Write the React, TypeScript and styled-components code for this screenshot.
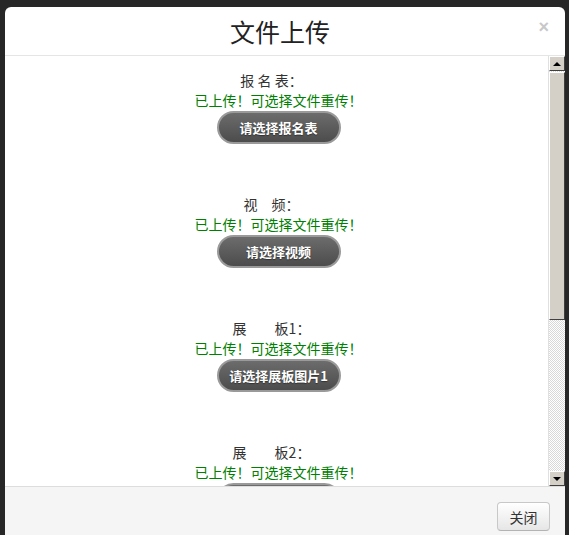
import React from "react";
import styled, { createGlobalStyle } from "styled-components";

const Global = createGlobalStyle`
  html, body { margin: 0; padding: 0; background: #272727; }
  body { font-family: "Liberation Sans", "Noto Sans CJK SC", sans-serif; }
`;

const Page = styled.div`
  width: 569px;
  height: 535px;
  overflow: hidden;
  background: #272727;
  padding: 7px 4px 0 5px;
  box-sizing: border-box;
`;

const Modal = styled.div`
  width: 560px;
  height: 540px;
  background: #fff;
  border-radius: 6px 6px 0 0;
  display: flex;
  flex-direction: column;
  overflow: hidden;
`;

const Header = styled.div`
  height: 48px;
  border-bottom: 1px solid #e5e5e5;
  position: relative;
  display: flex;
  align-items: center;
  justify-content: center;
`;

const Title = styled.h3`
  margin: 0;
  font-family: "Noto Sans CJK SC", sans-serif;
  font-weight: 400;
  font-size: 25px;
  color: #222;
  margin-left: -10px;
`;

const Close = styled.span`
  position: absolute;
  right: 16px;
  top: 10px;
  font-family: "Liberation Sans", sans-serif;
  font-weight: bold;
  font-size: 18px;
  color: #c8c8c8;
`;

const Body = styled.div`
  height: 430px;
  display: flex;
`;

const Content = styled.div`
  flex: 1;
  overflow: hidden;
  padding-top: 14px;
  display: flex;
  flex-direction: column;
  align-items: center;
`;

const Section = styled.div`
  height: 124px;
  display: flex;
  flex-direction: column;
  align-items: center;
  flex-shrink: 0;
`;

const Label = styled.div`
  font-family: "Noto Sans CJK SC", sans-serif;
  font-size: 14px;
  line-height: 20px;
  color: #333;
  white-space: pre;
  padding-right: 10px;
`;

const Status = styled.div`
  font-family: "Noto Sans CJK SC", sans-serif;
  font-size: 14px;
  line-height: 21px;
  color: #008000;
  margin-left: 4px;
`;

const PickButton = styled.button`
  width: 124px;
  height: 33px;
  border-radius: 17px;
  border: 2px solid #9a9a9a;
  background: linear-gradient(#6c6c6c, #4c4c4c);
  color: #fff;
  font-family: "Noto Sans CJK SC", sans-serif;
  font-weight: bold;
  font-size: 13px;
  padding: 0;
  box-sizing: border-box;
  margin-left: 4px;
  text-shadow: 0 1px 1px rgba(0,0,0,0.4);
`;

const Scrollbar = styled.div`
  width: 16px;
  display: flex;
  flex-direction: column;
  border-left: 1px solid #e0e0e0;
  background-color: #f0f0f0;
  background-image: repeating-conic-gradient(#d8d8d8 0 25%, #fff 0 50%);
  background-size: 2px 2px;
`;

const Arrow = styled.div`
  height: 15px;
  background: #d4d0c8;
  border: 1px solid;
  border-color: #fff #404040 #404040 #fff;
  box-sizing: border-box;
  display: flex;
  align-items: center;
  justify-content: center;
  flex-shrink: 0;
`;

const Tri = styled.div<{ $down?: boolean }>`
  width: 0;
  height: 0;
  border-left: 4px solid transparent;
  border-right: 4px solid transparent;
  ${(p) => (p.$down ? "border-top: 4px solid #000;" : "border-bottom: 4px solid #000;")}
`;

const Thumb = styled.div`
  height: 248px;
  margin-top: 1px;
  background: #d4d0c8;
  border: 1px solid;
  border-color: #fff #404040 #404040 #fff;
  box-sizing: border-box;
  flex-shrink: 0;
`;

const Track = styled.div`
  flex: 1;
`;

const Footer = styled.div`
  flex: 1;
  background: #f5f5f5;
  border-top: 1px solid #ddd;
  display: flex;
  justify-content: flex-end;
  align-items: flex-start;
  padding: 15px 15px 0 0;
`;

const CloseButton = styled.button`
  width: 53px;
  height: 29px;
  border: 1px solid #c8c8c8;
  border-bottom-color: #b3b3b3;
  border-radius: 4px;
  background: linear-gradient(#fff, #e6e6e6);
  font-family: "Noto Sans CJK SC", sans-serif;
  font-size: 14px;
  color: #333;
  padding: 0;
`;

const items = [
  { label: "报 名 表：", btn: "请选择报名表" },
  { label: "视　频：", btn: "请选择视频" },
  { label: "展　　板1：", btn: "请选择展板图片1" },
  { label: "展　　板2：", btn: "请选择展板图片2" },
];

export default function App() {
  return (
    <>
      <Global />
      <Page>
        <Modal>
          <Header>
            <Title>文件上传</Title>
            <Close>×</Close>
          </Header>
          <Body>
            <Content>
              {items.map((it) => (
                <Section key={it.btn}>
                  <Label>{it.label}</Label>
                  <Status>已上传！可选择文件重传！</Status>
                  <PickButton>{it.btn}</PickButton>
                </Section>
              ))}
            </Content>
            <Scrollbar>
              <Arrow>
                <Tri />
              </Arrow>
              <Thumb />
              <Track />
              <Arrow>
                <Tri $down />
              </Arrow>
            </Scrollbar>
          </Body>
          <Footer>
            <CloseButton>关闭</CloseButton>
          </Footer>
        </Modal>
      </Page>
    </>
  );
}
